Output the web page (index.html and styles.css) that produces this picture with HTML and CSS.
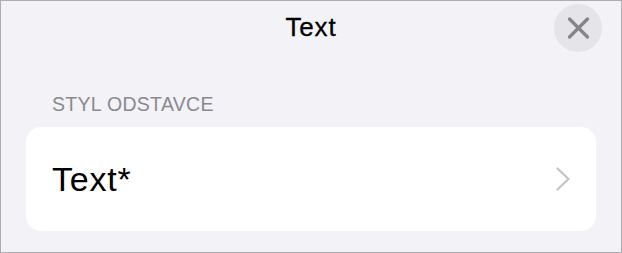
FILE: index.html
```html
<!DOCTYPE html>
<html lang="cs">
<head>
<meta charset="utf-8">
<title>Text</title>
<link rel="stylesheet" href="styles.css">
</head>
<body>
<div class="frame">
  <header class="header">
    <span></span>
    <h1 class="title">Text</h1>
    <button class="close" aria-label="Zavřít">
      <svg width="48" height="48" viewBox="0 0 48 48">
        <circle cx="24" cy="24" r="24" fill="#e4e4e9"/>
        <path d="M15.5 15 L33.5 33 M33.5 15 L15.5 33" stroke="#858589" stroke-width="3.2" stroke-linecap="round" fill="none"/>
      </svg>
    </button>
  </header>
  <div class="section-label">STYL ODSTAVCE</div>
  <div class="card">
    <span class="card-text">Text*</span>
    <svg class="chevron" width="14" height="24" viewBox="0 0 14 24">
      <polyline points="1.5,1.5 12.5,12 1.5,22.5" fill="none" stroke="#c4c4c8" stroke-width="2.2" stroke-linecap="round" stroke-linejoin="round"/>
    </svg>
  </div>
</div>
</body>
</html>
```

FILE: styles.css
```css
* { box-sizing: border-box; }
html, body { margin: 0; padding: 0; }
body {
  font-family: "Liberation Sans", Arial, sans-serif;
  background: #f2f2f7;
}
.frame {
  width: 622px;
  height: 253px;
  border: 1px solid #aeaeb2;
  background: #f2f2f7;
  overflow: hidden;
}
.header {
  display: grid;
  grid-template-columns: 1fr auto 1fr;
  align-items: start;
  padding-top: 3px;
}
.title {
  margin: 8px 0 0 0;
  font-size: 26px;
  line-height: 30px;
  font-weight: 400;
  letter-spacing: 0.8px;
  color: #000;
  -webkit-text-stroke: 0.3px #000;
}
.close {
  justify-self: end;
  margin: 0 19px 0 0;
  padding: 0;
  border: 0;
  background: none;
  width: 48px;
  height: 48px;
  display: block;
}
.close svg { display: block; }
.section-label {
  margin: 40px 0 0 51px;
  font-size: 19.5px;
  line-height: 24px;
  letter-spacing: 0.3px;
  color: #8a8a8e;
}
.card {
  margin: 11px 25px 0 25px;
  height: 104px;
  background: #fff;
  border-radius: 15px;
  display: flex;
  align-items: center;
  justify-content: space-between;
  padding: 0 26px 0 26px;
}
.card-text {
  font-size: 34px;
  line-height: 40px;
  letter-spacing: 0.8px;
  color: #000;
}
.chevron { display: block; }
```
